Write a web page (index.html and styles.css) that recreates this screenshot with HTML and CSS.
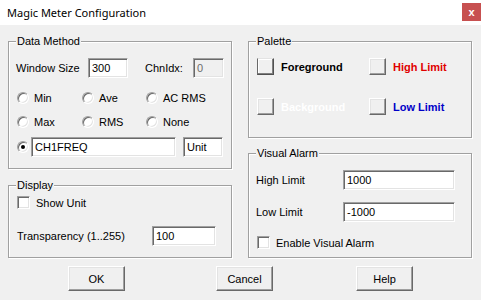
FILE: index.html
```html
<!DOCTYPE html>
<html>
<head>
<meta charset="utf-8">
<link rel="stylesheet" href="styles.css">
</head>
<body>
<div class="window">
  <div class="titlebar">
    <span class="title">Magic Meter Configuration</span>
    <span class="close">x</span>
  </div>
  <div class="content">
    <div class="cols">
      <div class="col">
        <fieldset class="group dm">
          <legend>Data Method</legend>
          <div class="row">
            <span class="lbl w-ws">Window Size</span>
            <span class="field f-ws">300</span>
            <span class="lbl w-ch">ChnIdx:</span>
            <span class="field disabled f-ch">0</span>
          </div>
          <div class="radios">
            <span class="opt"><span class="radio"></span>Min</span>
            <span class="opt"><span class="radio"></span>Ave</span>
            <span class="opt"><span class="radio"></span>AC RMS</span>
            <span class="opt"><span class="radio"></span>Max</span>
            <span class="opt"><span class="radio"></span>RMS</span>
            <span class="opt"><span class="radio"></span>None</span>
          </div>
          <div class="row r-name">
            <span class="radio checked"></span>
            <span class="field f-name">CH1FREQ</span>
            <span class="field f-unit">Unit</span>
          </div>
        </fieldset>
        <fieldset class="group disp">
          <legend>Display</legend>
          <div class="row r-show"><span class="check"></span><span class="lbl">Show Unit</span></div>
          <div class="row r-trans">
            <span class="lbl w-tr">Transparency (1..255)</span>
            <span class="field f-tr">100</span>
          </div>
        </fieldset>
      </div>
      <div class="col">
        <fieldset class="group pal">
          <legend>Palette</legend>
          <div class="swrow">
            <span class="sw-item"><span class="swatch focus"></span><span class="swlbl fg">Foreground</span></span>
            <span class="sw-item"><span class="swatch"></span><span class="swlbl hi">High Limit</span></span>
          </div>
          <div class="swrow sw2">
            <span class="sw-item"><span class="swatch"></span><span class="swlbl bg">Background</span></span>
            <span class="sw-item"><span class="swatch"></span><span class="swlbl lo">Low Limit</span></span>
          </div>
        </fieldset>
        <fieldset class="group va">
          <legend>Visual Alarm</legend>
          <div class="row"><span class="lbl w-lim">High Limit</span><span class="field f-lim">1000</span></div>
          <div class="row r-low"><span class="lbl w-lim">Low Limit</span><span class="field f-lim">-1000</span></div>
          <div class="row r-en"><span class="check"></span><span class="lbl">Enable Visual Alarm</span></div>
        </fieldset>
      </div>
    </div>
    <div class="buttons">
      <span class="btn b-ok">OK</span>
      <span class="btn b-cancel">Cancel</span>
      <span class="btn b-help">Help</span>
    </div>
  </div>
</div>
</body>
</html>
```
FILE: styles.css
```css
* { box-sizing: border-box; }
html, body { margin: 0; padding: 0; }
body {
  width: 481px;
  height: 300px;
  overflow: hidden;
  background: #f0f0f0;
  font-family: "Liberation Sans", Arial, sans-serif;
  font-size: 11px;
  color: #000;
}
.window { width: 481px; height: 300px; }
.titlebar {
  height: 25px;
  background: #fff;
  display: flex;
  align-items: center;
  justify-content: space-between;
  padding-left: 7px;
}
.title {
  font-family: "Noto Sans", sans-serif;
  font-size: 11px;
  color: #000;
}
.close {
  width: 19px;
  height: 18px;
  margin-top: -1px;
  background: #c75050;
  color: #fff;
  font-weight: bold;
  font-size: 11px;
  display: flex;
  align-items: center;
  justify-content: center;
}
.content { padding-top: 10px; }
.cols { display: flex; padding-left: 8px; gap: 16px; }
.col { width: 224px; display: flex; flex-direction: column; }

.group {
  margin: 0;
  min-width: 0;
  border: 1px solid #a0a0a0;
  box-shadow: inset 1px 1px 0 #fff, 1px 1px 0 #fff;
  padding: 10px 7px 11px 7px;
}
.group legend {
  padding: 0 1px;
  line-height: 13px;
  background: #f0f0f0;
}
.row { display: flex; align-items: center; height: 20px; }
.lbl { white-space: nowrap; }
.w-ws { width: 72px; }
.w-ch { width: 48px; margin-left: 17px; }
.field {
  height: 20px;
  background: #fff;
  border: 1px solid;
  border-color: #a0a0a0 #fff #fff #a0a0a0;
  box-shadow: inset 1px 1px 0 #696969, inset -1px -1px 0 #e3e3e3;
  padding: 0 3px;
  display: flex;
  align-items: center;
  white-space: nowrap;
}
.f-ws { width: 40px; }
.f-ch { width: 31px; }
.disabled { background: #f0f0f0; color: #6d6d6d; }

.radios {
  margin-top: 8px;
  display: grid;
  grid-template-columns: 65px 64px auto;
  grid-auto-rows: 24px;
}
.opt { display: flex; align-items: center; }
.radio {
  width: 12px;
  height: 12px;
  margin-left: 1px;
  margin-right: 5px;
  border-radius: 50%;
  background: #fff;
  border: 1px solid;
  border-color: #a0a0a0 #fff #fff #a0a0a0;
  box-shadow: inset 1px 1px 0 #696969, inset -1px -1px 0 #e3e3e3;
  position: relative;
  flex: none;
}
.radio.checked::after {
  content: "";
  position: absolute;
  left: 3px;
  top: 3px;
  width: 4px;
  height: 4px;
  border-radius: 50%;
  background: #000;
}
.r-name { margin-top: 3px; }
.r-name .radio { margin-right: 2px; }
.f-name { width: 145px; }
.f-unit { width: 40px; margin-left: 7px; }

.disp { margin-top: 10px; padding-top: 4px; }
.check {
  width: 13px;
  height: 13px;
  background: #fff;
  border: 1px solid;
  border-color: #a0a0a0 #fff #fff #a0a0a0;
  box-shadow: inset 1px 1px 0 #696969, inset -1px -1px 0 #e3e3e3;
  margin-right: 6px;
  flex: none;
}
.r-show { height: 13px; }
.r-trans { margin-top: 17px; }
.w-tr { width: 136px; padding-left: 1px; }
.f-tr { width: 64px; }

.pal { padding-top: 10px; padding-bottom: 22px; }
.swrow { display: flex; height: 17px; }
.sw2 { margin-top: 23px; }
.sw-item { display: flex; align-items: center; width: 112px; flex: none; }
.sw-item + .sw-item { width: auto; }
.swatch {
  width: 17px;
  height: 17px;
  margin-left: 1px;
  background: #f0f0f0;
  border: 1px solid;
  border-color: #fff #696969 #696969 #fff;
  box-shadow: inset -1px -1px 0 #a0a0a0, inset 1px 1px 0 #e3e3e3;
  flex: none;
}
.swatch.focus {
  border-color: #e3e3e3 #505050 #505050 #696969;
  box-shadow: inset -1px -1px 0 #808080, inset 1px 1px 0 #fff;
}
.swlbl { font-weight: bold; margin-left: 7px; white-space: nowrap; }
.fg { color: #000; }
.hi { color: #e00000; }
.bg { color: #fff; }
.lo { color: #0000c8; }

.va { margin-top: 9px; padding-bottom: 8px; }
.w-lim { width: 87px; }
.f-lim { width: 112px; }
.r-low { margin-top: 12px; }
.r-en { margin-top: 14px; height: 13px; }
.r-en .check, .r-show .check { margin-left: 1px; }

.buttons { display: flex; margin-top: 8px; height: 25px; }
.btn {
  width: 57px;
  height: 25px;
  background: #f0f0f0;
  border: 1px solid;
  border-color: #fff #696969 #696969 #fff;
  box-shadow: inset -1px -1px 0 #a0a0a0, inset 1px 1px 0 #e3e3e3;
  display: flex;
  align-items: center;
  justify-content: center;
}
.b-ok { margin-left: 68px; }
.b-cancel { margin-left: 91px; }
.b-help { margin-left: 83px; }
```
